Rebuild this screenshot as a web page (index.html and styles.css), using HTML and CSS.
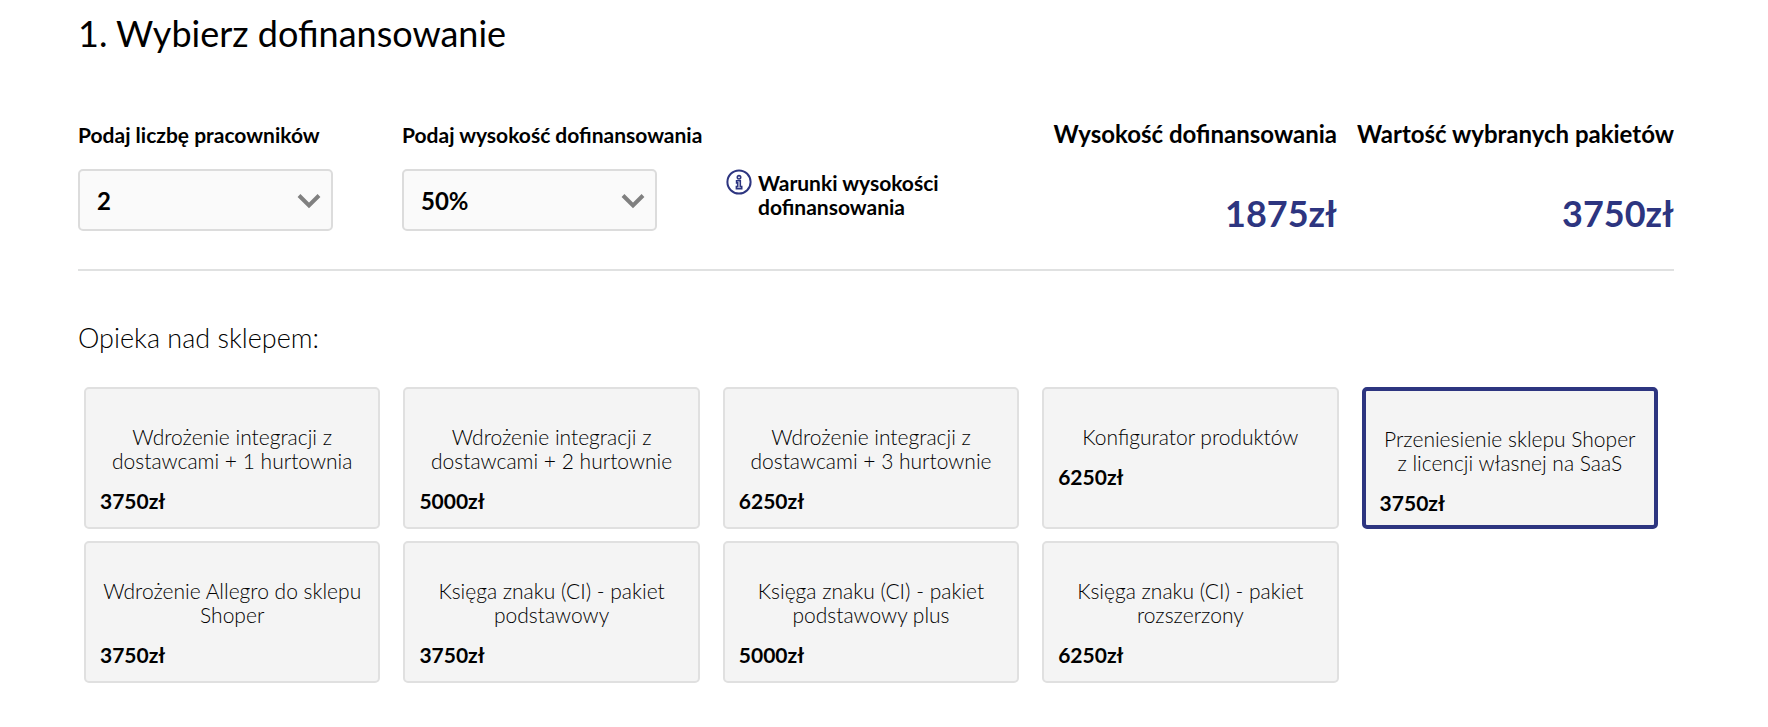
FILE: index.html
```
<!DOCTYPE html>
<html lang="pl">
<head>
  <meta charset="UTF-8">
  <title>Wybierz dofinansowanie</title>
  <meta name="viewport" content="width=device-width, initial-scale=1.0">
  <link rel="stylesheet" href="styles.css">
</head>
<body>
  <main class="kalkulator">
    <h1>1. Wybierz dofinansowanie</h1>

    <section class="ustawienia">
      <div class="pole">
        <label for="pracownicy">Podaj liczbę pracowników</label>
        <div class="lista">
          <select id="pracownicy">
            <option>1</option>
            <option selected>2</option>
            <option>3</option>
            <option>4</option>
          </select>
          <svg class="strzalka" viewBox="0 0 24 16"><path d="M2 2.5 12 12.5 22 2.5"/></svg>
        </div>
      </div>

      <div class="pole">
        <label for="wysokosc">Podaj wysokość dofinansowania</label>
        <div class="lista">
          <select id="wysokosc">
            <option selected>50%</option>
            <option>60%</option>
            <option>80%</option>
          </select>
          <svg class="strzalka" viewBox="0 0 24 16"><path d="M2 2.5 12 12.5 22 2.5"/></svg>
        </div>
      </div>

      <a class="warunki" href="#">
        <svg class="info" viewBox="0 0 26 26">
          <circle cx="13" cy="13" r="11.6" stroke-width="2"/>
          <circle cx="13" cy="8.3" r="1.7" stroke-width="1.6"/>
          <path d="M10.6 11.8h3.7v5.7h1.4v2.1h-5.3v-2.1h1.3v-3.6h-1.1z" stroke-width="1.6"/>
        </svg>
        <span>Warunki wysokości dofinansowania</span>
      </a>

      <div class="suma">
        <h2>Wysokość dofinansowania</h2>
        <strong class="kwota">1875zł</strong>
      </div>
      <div class="suma">
        <h2>Wartość wybranych pakietów</h2>
        <strong class="kwota">3750zł</strong>
      </div>
    </section>

    <h3>Opieka nad sklepem:</h3>

    <section class="pakiety">
      <button class="pakiet"><span class="nazwa">Wdrożenie integracji z dostawcami + 1 hurtownia</span><span class="cena">3750zł</span></button>
      <button class="pakiet"><span class="nazwa">Wdrożenie integracji z dostawcami + 2 hurtownie</span><span class="cena">5000zł</span></button>
      <button class="pakiet"><span class="nazwa">Wdrożenie integracji z dostawcami + 3 hurtownie</span><span class="cena">6250zł</span></button>
      <button class="pakiet"><span class="nazwa">Konfigurator produktów</span><span class="cena">6250zł</span></button>
      <button class="pakiet wybrany"><span class="nazwa">Przeniesienie sklepu Shoper z licencji własnej na SaaS</span><span class="cena">3750zł</span></button>
      <button class="pakiet"><span class="nazwa">Wdrożenie Allegro do sklepu Shoper</span><span class="cena">3750zł</span></button>
      <button class="pakiet"><span class="nazwa">Księga znaku (CI) - pakiet podstawowy</span><span class="cena">3750zł</span></button>
      <button class="pakiet"><span class="nazwa">Księga znaku (CI) - pakiet podstawowy plus</span><span class="cena">5000zł</span></button>
      <button class="pakiet"><span class="nazwa">Księga znaku (CI) - pakiet rozszerzony</span><span class="cena">6250zł</span></button>
    </section>
  </main>

  <script>
    document.querySelectorAll(".pakiet").forEach(function (pakiet) {
      pakiet.addEventListener("click", function () {
        pakiet.classList.toggle("wybrany");
      });
    });
  </script>
</body>
</html>
```
FILE: styles.css
```
* {
  box-sizing: border-box;
}
body {
  margin: 0;
  background: #fff;
  color: #000;
  font-family: Lato, sans-serif;
}
.kalkulator {
  padding: 11px 94px 44px 78px;
}
h1 {
  margin: 0;
  font-size: 36px;
  font-weight: 400;
  line-height: 44px;
}
.ustawienia {
  display: flex;
  margin-top: 66px;
  padding-bottom: 34px;
  border-bottom: 2px solid #e0e1e1;
}
.pole {
  width: 324px;
}
.pole label {
  display: block;
  margin-bottom: 21px;
  padding-top: 1px;
  font-size: 21px;
  font-weight: bold;
  line-height: 26px;
}
.lista {
  position: relative;
  width: 255px;
}
.lista select {
  appearance: none;
  width: 100%;
  height: 62px;
  padding: 0 17px;
  border: 2px solid #dcdcdc;
  border-radius: 5px;
  background: #fafafa;
  color: #000;
  font-family: inherit;
  font-size: 24px;
  font-weight: bold;
}
.strzalka {
  position: absolute;
  top: 24px;
  right: 12px;
  width: 24px;
  height: 16px;
  fill: none;
  stroke: #808080;
  stroke-width: 4;
  pointer-events: none;
}
.warunki {
  display: flex;
  gap: 6px;
  width: 240px;
  margin-top: 48px;
  color: #000;
  font-size: 21px;
  font-weight: bold;
  line-height: 24px;
  text-decoration: none;
}
.warunki span {
  padding-top: 2px;
}
.info {
  flex: none;
  width: 26px;
  height: 26px;
  fill: none;
  stroke: #2d3580;
}
.suma {
  margin-left: 20px;
  text-align: right;
}
.warunki + .suma {
  margin-left: auto;
}
h2 {
  margin: 0 0 44px;
  font-size: 24px;
  font-weight: bold;
  line-height: 26px;
}
.kwota {
  display: block;
  color: #2d3580;
  font-size: 36px;
  line-height: 44px;
}
h3 {
  margin: 50px 0 32px;
  font-size: 27px;
  font-weight: 300;
  line-height: 34px;
}
.pakiety {
  display: grid;
  grid-template-columns: repeat(5, 1fr);
  gap: 12px 23px;
  margin: 0 16px 0 6px;
}
.pakiet {
  display: flex;
  flex-direction: column;
  min-height: 142px;
  padding: 36px 14px 10px;
  border: 2px solid #e0e0e0;
  border-radius: 5px;
  background: #f4f4f4;
  color: #000;
  font-family: inherit;
  font-size: 21px;
  line-height: 24px;
  cursor: pointer;
}
.pakiet.wybrany {
  border: 4px solid #2d3580;
}
.nazwa {
  width: 100%;
  font-weight: 300;
  text-align: center;
}
.cena {
  margin-top: 16px;
  font-weight: bold;
  text-align: left;
  align-self: flex-start;
}
```
